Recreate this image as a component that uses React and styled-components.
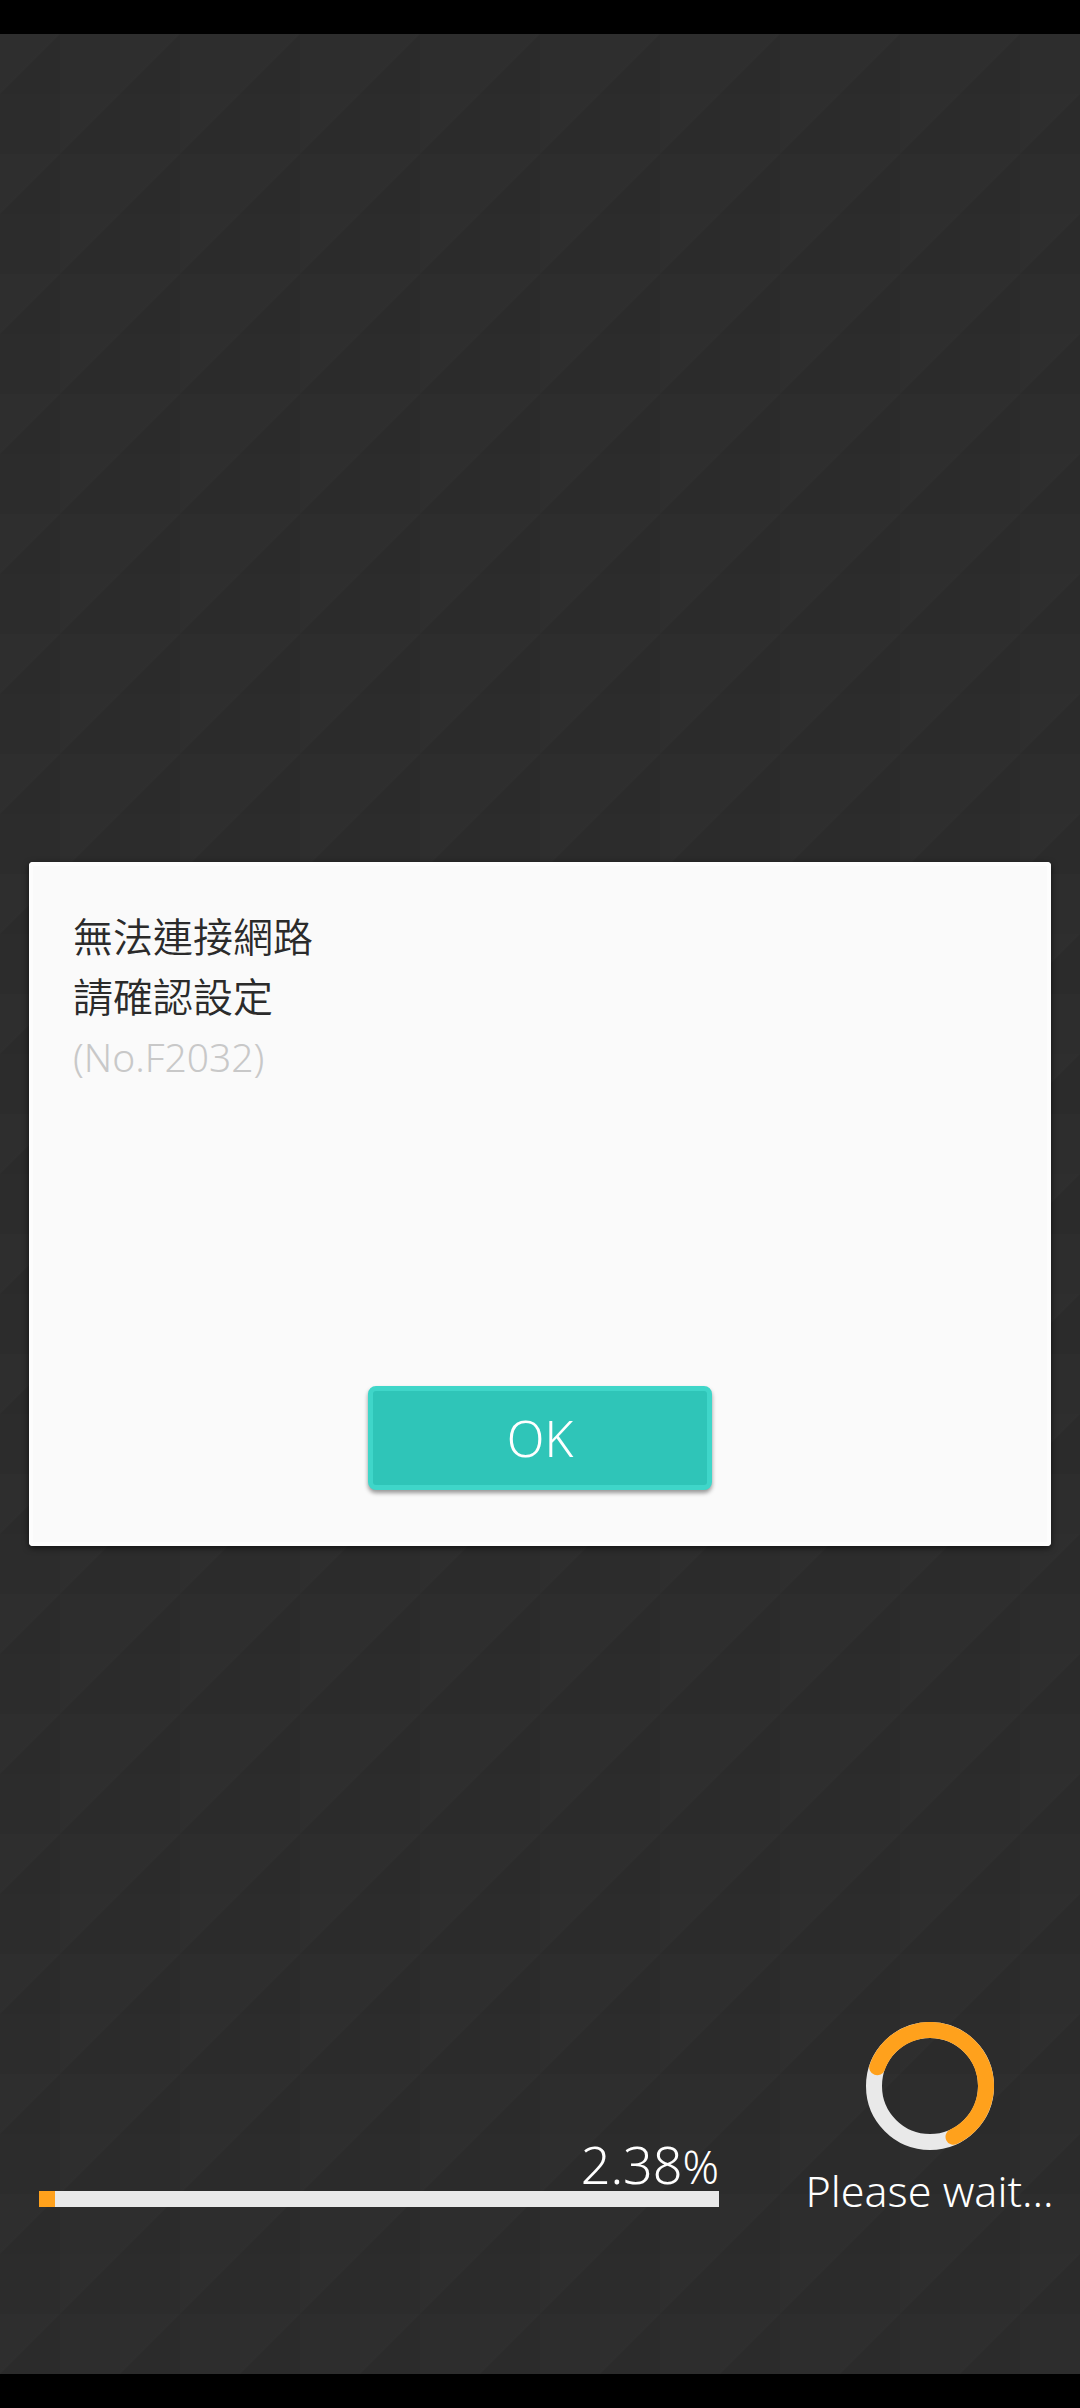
import styled, { createGlobalStyle } from "styled-components";

const GlobalStyle = createGlobalStyle`
  body {
    margin: 0;
    background: #000;
    font-family: "Noto Sans", "Noto Sans CJK TC", sans-serif;
    font-weight: 300;
  }
`;

const Screen = styled.div`
  display: flex;
  flex-direction: column;
  box-sizing: border-box;
  min-height: 100vh;
  padding: 34px 0;
`;

// 60px cells: two shaded diagonally, two plain
const Stage = styled.main`
  flex: 1;
  display: grid;
  grid-template-rows: 1fr auto 1fr;
  background-image:
    conic-gradient(
      #2d2d2d 25%,
      transparent 25% 50%,
      #2c2c2c 50% 75%,
      transparent 75%
    ),
    linear-gradient(135deg, #2e2e2e 46%, #2f2f2f 49%, #2b2b2b 51%);
  background-size: 120px 120px, 60px 60px;
`;

const Dialog = styled.section`
  grid-row: 2;
  display: flex;
  flex-direction: column;
  justify-content: space-between;
  box-sizing: border-box;
  min-height: 684px;
  margin: 0 29px;
  padding: 45px 44px 56px;
  background: #fafafa;
  border-radius: 4px;
  box-shadow: 0 2px 6px rgba(0, 0, 0, 0.6), inset 0 0 0 4px #fdfdfd;
`;

const Message = styled.p`
  margin: 0;
  color: #2b2b2b;
  font-size: 40px;
  font-weight: 350;
  line-height: 60px;
`;

const ErrorCode = styled.span`
  color: #c8c8c8;
  font-size: 39px;
  font-weight: 300;
`;

const OkButton = styled.button`
  align-self: center;
  width: 344px;
  height: 104px;
  padding: 0;
  border: 5px solid #3fd6c9;
  border-radius: 8px;
  background: #2fc5b8;
  box-shadow: 0 3px 4px rgba(0, 0, 0, 0.4);
  color: #fff;
  font: inherit;
  font-size: 49px;
  line-height: 60px;
  cursor: pointer;
`;

const Loading = styled.footer`
  grid-row: 3;
  align-self: end;
  display: flex;
  align-items: flex-end;
  gap: 88px;
  padding: 0 28px 159px 39px;
`;

const Progress = styled.div`
  flex: 1;
  padding-bottom: 8px;
  text-align: right;
`;

const Percent = styled.div`
  color: #fff;
  font-size: 52px;
  line-height: 48px;

  small {
    font-size: 45px;
  }
`;

const Track = styled.div`
  height: 16px;
  background: #e9e9e9;
`;

const Fill = styled.div`
  height: 100%;
  background: #ffa11c;
`;

const Waiting = styled.div`
  display: flex;
  flex-direction: column;
  align-items: center;
  gap: 17px;
  width: 245px;
  color: #fff;
  font-size: 43px;
  line-height: 48px;
  white-space: nowrap;
`;

function Spinner() {
  return (
    <svg width="128" height="128" viewBox="-64 -64 128 128" fill="none" strokeWidth="16" aria-hidden="true">
      <circle r="56" stroke="#e9e9e9" />
      <path d="M-52.8 -18.7A56 56 0 1 1 23.5 50.8" stroke="#ffa11c" strokeLinecap="round" />
    </svg>
  );
}

export default function App() {
  const progress = 2.38;

  return (
    <Screen>
      <GlobalStyle />
      <Stage>
        <Dialog role="alertdialog" aria-describedby="message">
          <Message id="message" lang="zh-Hant">
            無法連接網路
            <br />
            請確認設定
            <br />
            <ErrorCode>(No.F2032)</ErrorCode>
          </Message>
          <OkButton type="button">OK</OkButton>
        </Dialog>

        <Loading>
          <Progress>
            <Percent>
              {progress}
              <small>%</small>
            </Percent>
            <Track role="progressbar" aria-label="Loading" aria-valuenow={progress}>
              <Fill style={{ width: `${progress}%` }} />
            </Track>
          </Progress>
          <Waiting>
            <Spinner />
            <span>Please wait...</span>
          </Waiting>
        </Loading>
      </Stage>
    </Screen>
  );
}
